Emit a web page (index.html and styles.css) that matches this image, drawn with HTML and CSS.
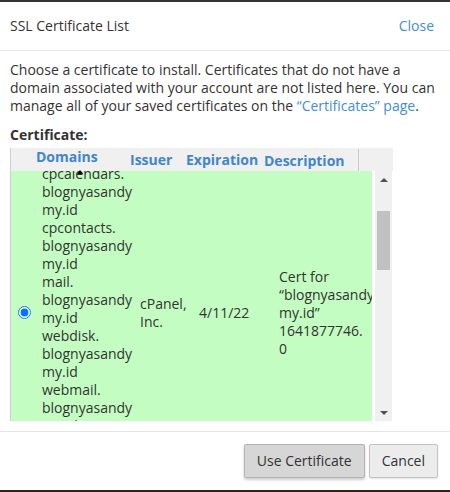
FILE: index.html
```html
<!DOCTYPE html>
<html lang="en">
<head>
  <meta charset="UTF-8" />
  <title>SSL Certificate List</title>
  <link rel="stylesheet" href="styles.css">
</head>
<body>
  <div class="page-edge"></div>

  <div class="modal">
    <div class="modal-header">
      <h4>SSL Certificate List</h4>
      <a class="close-link" href="#">Close</a>
    </div>

    <div class="modal-body">
      <p>Choose a certificate to install. Certificates that do not have a domain associated with your account are not listed here. You can manage all of your saved certificates on the <a href="#">“Certificates” page</a>.</p>
      <div class="field-label">Certificate:</div>

      <div class="cert-table">
        <div class="cert-head">
          <span></span>
          <span class="col sorted">Domains<i class="sort-arrow"></i></span>
          <span class="col">Issuer</span>
          <span class="col">Expiration</span>
          <span class="col last">Description</span>
          <span></span>
        </div>

        <div class="cert-body">
          <div class="cert-viewport">
            <div class="cert-row">
              <div class="cell-radio"><input type="radio" name="cert" checked></div>
              <div class="cell-domains">
                <div>cpanel.<wbr>blognyasandy<wbr>my.id</div>
                <div>cpcalendars.<wbr>blognyasandy<wbr>my.id</div>
                <div>cpcontacts.<wbr>blognyasandy<wbr>my.id</div>
                <div>mail.<wbr>blognyasandy<wbr>my.id</div>
                <div>webdisk.<wbr>blognyasandy<wbr>my.id</div>
                <div>webmail.<wbr>blognyasandy<wbr>my.id</div>
                <div>www.<wbr>blognyasandy<wbr>my.id</div>
              </div>
              <div class="cell-issuer">cPanel, Inc.</div>
              <div class="cell-exp">4/11/22</div>
              <div class="cell-desc">Cert for “blognyasandy<wbr>my.id” 1641877746.<wbr>0</div>
            </div>
          </div>

          <div class="scrollbar">
            <div class="sb-btn"><i class="tri-up"></i></div>
            <div class="sb-track"><div class="sb-thumb"></div></div>
            <div class="sb-btn"><i class="tri-down"></i></div>
          </div>
        </div>
      </div>
    </div>

    <div class="modal-footer">
      <button class="btn btn-primary">Use Certificate</button>
      <button class="btn">Cancel</button>
    </div>
  </div>

  <div class="page-edge bottom"></div>
</body>
</html>
```

FILE: styles.css
```css
body {
  margin: 0;
  background: #fff;
  font-family: "Open Sans", "Liberation Sans", sans-serif;
  font-size: 14px;
  line-height: 18px;
  color: #333;
}

a {
  color: #3f8ed6;
  text-decoration: none;
}

.page-edge {
  height: 2px;
  background: #343434;
}

.page-edge.bottom {
  background: #2b2615;
}

.modal-header {
  height: 48px;
  display: flex;
  align-items: center;
  justify-content: space-between;
  padding: 0 16px 0 10px;
  border-bottom: 1px solid #e5e5e5;
}

.modal-header h4 {
  margin: 0;
  font-size: 14px;
  font-weight: normal;
}

.modal-body {
  padding: 10px 10px 10px 10px;
}

.modal-body p {
  margin: 0 0 11px;
}

.field-label {
  font-weight: bold;
  margin-bottom: 4px;
}

.cert-table {
  width: 382px;
  border-left: 1px solid #cfcfcf;
}

.cert-head {
  display: grid;
  grid-template-columns: 25px 94px 56px 78px 95px 1fr;
  height: 23px;
  align-items: center;
  background: #f0f0f0;
}

.cert-head .col {
  font-weight: bold;
  color: #3f86cf;
  white-space: nowrap;
}

.cert-head .last {
  height: 23px;
  line-height: 23px;
  border-right: 1px solid #c9c9c9;
}

.cert-head .sorted {
  position: relative;
  padding-bottom: 6px;
}

.sort-arrow {
  position: absolute;
  left: 41px;
  bottom: -2px;
  width: 0;
  height: 0;
  border-left: 3px solid transparent;
  border-right: 3px solid transparent;
  border-bottom: 4px solid #000;
  z-index: 2;
}

.cert-body {
  display: flex;
  height: 250px;
}

.cert-viewport {
  width: 361px;
  margin-right: 3px;
  overflow: hidden;
  background: #c3fdc1;
}

.cert-row {
  display: grid;
  grid-template-columns: 31px 98px 59px 80px 94px;
  align-items: center;
  margin-top: -60px;
}

.cell-radio input {
  display: block;
  margin: 0 0 0 7px;
  width: 13px;
  height: 13px;
}

.cell-domains {
  padding-bottom: 25px;
}

.cell-desc {
  padding-right: 6px;
  white-space: normal;
}

.scrollbar {
  width: 17px;
  display: flex;
  flex-direction: column;
  background: #f0f0f0;
}

.sb-btn {
  height: 17px;
  display: flex;
  align-items: center;
  justify-content: center;
}

.sb-track {
  flex: 1;
  padding: 23px 2px 0;
}

.sb-thumb {
  height: 59px;
  background: #c1c1c1;
}

.tri-up,
.tri-down {
  width: 0;
  height: 0;
  border-left: 4px solid transparent;
  border-right: 4px solid transparent;
}

.tri-up {
  border-bottom: 4px solid #505050;
}

.tri-down {
  border-top: 4px solid #505050;
}

.modal-footer {
  border-top: 1px solid #e5e5e5;
  padding: 12px 12px;
  display: flex;
  justify-content: flex-end;
  gap: 4px;
}

.btn {
  font-family: inherit;
  font-size: 14px;
  line-height: 20px;
  color: #333;
  padding: 6px 12px;
  background: #ececec;
  border: 1px solid #c4c4c4;
  border-radius: 2px;
  box-shadow: 0 1px 2px rgba(0, 0, 0, 0.12);
}

.btn-primary {
  background: #d6d6d6;
  border-color: #b3b3b3;
  box-shadow: 0 2px 3px rgba(0, 0, 0, 0.2);
}
```
